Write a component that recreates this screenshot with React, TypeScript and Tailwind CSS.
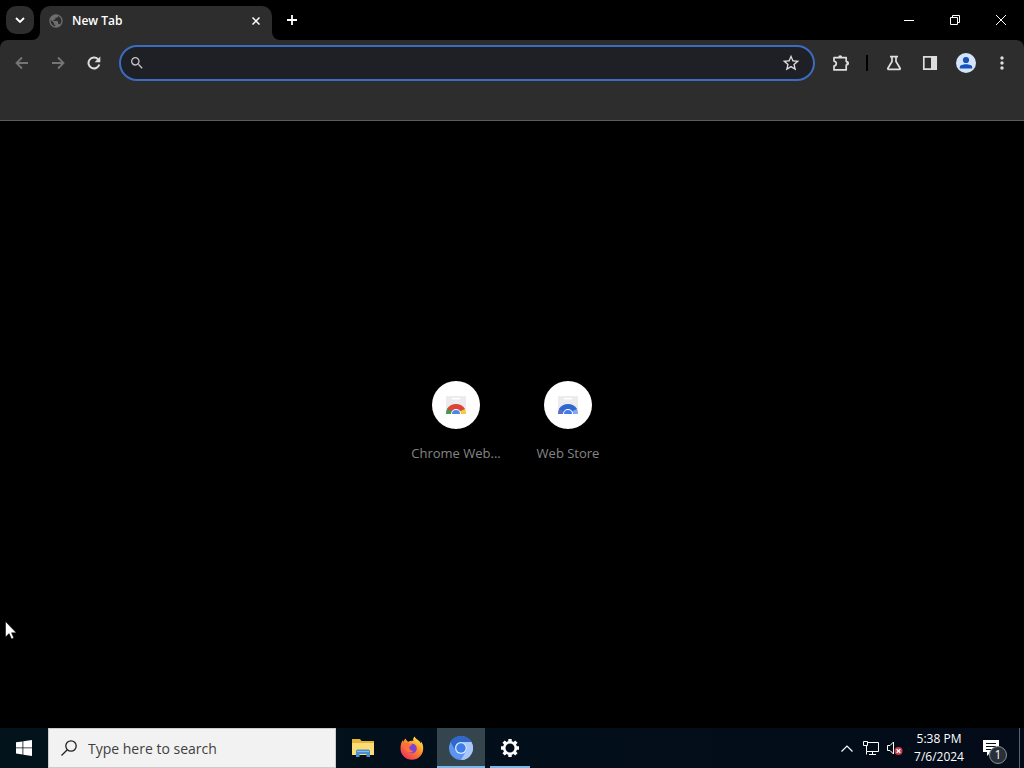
import type { ReactNode } from 'react';
import { MdMoreVert, MdPublic, MdSearch, MdStarBorder } from 'react-icons/md';

type Shortcut = { label: string; href: string; arcs: [string, string, string, string] };

const shortcuts: Shortcut[] = [
  { label: 'Chrome Web...', href: '#chrome-web-store', arcs: ['#db4437', '#3f9d52', '#f5c945', '#4a86e8'] },
  { label: 'Web Store', href: '#web-store', arcs: ['#2f66d0', '#5b6fd0', '#7fa8f5', '#3f7de8'] },
];

function ToolbarButton({ label, dim, children }: { label: string; dim?: boolean; children: ReactNode }) {
  return (
    <button
      type="button"
      aria-label={label}
      className={`grid h-9 w-9 shrink-0 place-items-center rounded-full ${dim ? 'text-[#757575]' : 'text-[#dedede]'}`}
    >
      {children}
    </button>
  );
}

function WindowButton({ label, children }: { label: string; children: ReactNode }) {
  return (
    <button type="button" aria-label={label} className="grid h-10 w-[46px] place-items-center text-white">
      <svg width="12" height="12" viewBox="0 0 12 12" fill="none" stroke="currentColor">
        {children}
      </svg>
    </button>
  );
}

function TabStrip() {
  return (
    <header className="flex h-10 items-end bg-black">
      <button
        type="button"
        aria-label="Search tabs"
        className="mb-1.5 ml-1.5 grid h-7 w-7 place-items-center rounded-[10px] bg-[#2d2d2d] text-white"
      >
        <svg width="10" height="6" viewBox="0 0 10 6" fill="none" stroke="currentColor" strokeWidth="1.8">
          <path d="M1 1l4 4 4-4" />
        </svg>
      </button>
      <div className="relative ml-1.5 flex h-[34px] w-[232px] items-center rounded-t-[10px] bg-[#2d2d2d] px-2 pb-1">
        <svg className="absolute bottom-0 -left-2" width="8" height="8" fill="#2d2d2d">
          <path d="M8 0v8H0a8 8 0 0 0 8-8z" />
        </svg>
        <svg className="absolute -right-2 bottom-0" width="8" height="8" fill="#2d2d2d">
          <path d="M0 0v8h8a8 8 0 0 1-8-8z" />
        </svg>
        <MdPublic className="h-4 w-4 text-[#6e6e6e]" />
        <span className="ml-2 flex-1 text-xs font-semibold text-white">New Tab</span>
        <button type="button" aria-label="Close tab" className="grid h-4 w-4 place-items-center text-white">
          <svg width="8" height="8" viewBox="0 0 8 8" stroke="currentColor" strokeWidth="1.5">
            <path d="M.5.5l7 7M7.5.5l-7 7" />
          </svg>
        </button>
      </div>
      <button type="button" aria-label="New tab" className="mb-1.5 ml-1.5 grid h-7 w-7 place-items-center text-white">
        <svg width="10" height="10" viewBox="0 0 10 10" stroke="currentColor" strokeWidth="1.8">
          <path d="M5 0v10M0 5h10" />
        </svg>
      </button>
      <div className="ml-auto flex">
        <WindowButton label="Minimize">
          <path d="M1 6.5h10" />
        </WindowButton>
        <WindowButton label="Restore">
          <path d="M1.5 3.5h7v7h-7zM3.5 3.5v-2h7v7h-2" />
        </WindowButton>
        <WindowButton label="Close">
          <path d="M1 1l10 10M11 1L1 11" />
        </WindowButton>
      </div>
    </header>
  );
}

function Toolbar() {
  return (
    <div className="bg-black">
      <div className="h-[81px] rounded-t-lg border-b border-[#5c5c5c] bg-[#2d2d2d] px-1 pt-[5px]">
        <div className="flex items-center">
          <ToolbarButton label="Back" dim>
            <svg width="14" height="14" viewBox="0 0 14 14" fill="none" stroke="currentColor" strokeWidth="1.8">
              <path d="M13 7H2M7 1.500L1.500 7 7 12.500" />
            </svg>
          </ToolbarButton>
          <ToolbarButton label="Forward" dim>
            <svg width="14" height="14" viewBox="0 0 14 14" fill="none" stroke="currentColor" strokeWidth="1.8">
              <path d="M1 7h11M7 1.500L12.500 7 7 12.500" />
            </svg>
          </ToolbarButton>
          <ToolbarButton label="Reload">
            <svg width="14" height="14" viewBox="0 0 14 14" fill="none" stroke="currentColor" strokeWidth="2">
              <path d="M12.300 8.500A5.500 5.500 0 1 1 11 3.200" />
              <path d="M13.300.5v5.700H7.600z" fill="currentColor" stroke="none" />
            </svg>
          </ToolbarButton>
          <div className="mr-2 ml-[7px] flex h-9 flex-1 items-center rounded-full border-2 border-[#3c6cc0] bg-[#1f1f26] px-2">
            <MdSearch className="h-4 w-4 text-[#c4c4c4]" />
            <input
              type="text"
              aria-label="Address and search bar"
              className="mx-2 min-w-0 flex-1 bg-transparent text-sm text-white outline-none"
            />
            <button type="button" aria-label="Bookmark this tab" className="px-1 text-[#dedede]">
              <MdStarBorder className="h-5 w-5" />
            </button>
          </div>
          <ToolbarButton label="Extensions">
            <svg width="18" height="18" viewBox="0 0 18 18">
              <path
                d="M2 3.600h12.200v4q2 .1 2 1.700t-2 1.700v4.900H2v-3.800q2.300-.5 2.300-2.500T2 7.100z"
                fill="none"
                stroke="currentColor"
                strokeWidth="1.7"
                strokeLinejoin="round"
              />
              <path d="M6.200 3.200a2 2 0 0 1 4 0zM14.500 7.300a2 2 0 0 1 0 4z" fill="currentColor" />
            </svg>
          </ToolbarButton>
          <div className="mr-2 ml-[7px] h-4 w-0.5 bg-black" />
          <ToolbarButton label="Experiments">
            <svg width="16" height="16" viewBox="0 0 16 16" fill="none" stroke="currentColor" strokeWidth="1.7">
              <path d="M4 1.6h8M6 1.6v4.9L1.9 13.2q-.4 1 .7 1.2h10.8q1.1-.2.7-1.2L10 6.5V1.6" />
            </svg>
          </ToolbarButton>
          <ToolbarButton label="Side panel">
            <svg width="16" height="16" viewBox="0 0 16 16">
              <path d="M1.8 1.8h12.4v12.4H1.8z" fill="none" stroke="currentColor" strokeWidth="1.7" />
              <path d="M9 1h6v14H9z" fill="currentColor" />
            </svg>
          </ToolbarButton>
          <ToolbarButton label="Profile">
            <svg width="20" height="20" viewBox="0 0 20 20">
              <circle cx="10" cy="10" r="10" fill="#d5e4fb" />
              <circle cx="10" cy="7" r="3.1" fill="#1553b8" />
              <path d="M3.800 15.500v-1.300c0-2 3.200-2.900 6.200-2.900s6.200.9 6.200 2.900v1.300z" fill="#1553b8" />
            </svg>
          </ToolbarButton>
          <ToolbarButton label="Menu">
            <MdMoreVert className="h-5 w-5" />
          </ToolbarButton>
        </div>
      </div>
    </div>
  );
}

function StoreIcon({ arcs }: { arcs: Shortcut['arcs'] }) {
  const [top, left, right, core] = arcs;
  return (
    <svg width="24" height="24" viewBox="0 0 24 24">
      <path d="M2 3h20v18H2z" fill="#ececee" />
      <path d="M8 5h8v1.500H8z" fill="#fff" />
      <path d="M2 21a10 10 0 0 1 1.800-6.200L8.500 18 7.500 21z" fill={left} />
      <path d="M22 21a10 10 0 0 0-1.800-6.200L15.500 18l1 3z" fill={right} />
      <path d="M3 16a10.500 10.500 0 0 1 18 0l-4.500 2h-9z" fill={top} />
      <path d="M7 21a5 5 0 0 1 10 0z" fill="#fff" />
      <path d="M8 21a4 4 0 0 1 8 0z" fill={core} />
    </svg>
  );
}

function NewTabPage() {
  return (
    <main className="flex flex-1 items-center justify-center bg-black pb-[7px]">
      {shortcuts.map((s) => (
        <a key={s.label} href={s.href} className="flex h-28 w-28 flex-col items-center pt-4">
          <span className="grid h-12 w-12 place-items-center rounded-full bg-white">
            <StoreIcon arcs={s.arcs} />
          </span>
          <span className="mt-4 text-[13px] leading-4 text-[#858585]">{s.label}</span>
        </a>
      ))}
    </main>
  );
}

function TaskbarApp({ label, active, open, children }: { label: string; active?: boolean; open?: boolean; children: ReactNode }) {
  return (
    <button
      type="button"
      aria-label={label}
      className={`relative grid h-10 w-12 place-items-center ${active ? 'bg-[#34454e]' : ''}`}
    >
      {children}
      {(active || open) && (
        <span className={`absolute bottom-0 h-0.5 bg-[#76b9ed] ${active ? 'inset-x-0' : 'inset-x-1'}`} />
      )}
    </button>
  );
}

function Taskbar() {
  return (
    <footer className="flex h-10 items-stretch bg-linear-to-r from-[#02131c] to-[#030b18] text-white">
      <button type="button" aria-label="Start" className="grid w-12 place-items-center">
        <svg width="16" height="16" viewBox="0 0 16 16" fill="#fff">
          <path d="M0 2.300l6.500-.9v6.100H0zM7.300 1.300L16 0v7.500H7.300zM0 8.300h6.500v6.200L0 13.600zM7.300 8.300H16V16l-8.700-1.300z" />
        </svg>
      </button>
      <label className="flex w-72 items-center border border-[#c9cccd] bg-[#f2f2f2] px-3">
        <svg width="16" height="16" viewBox="0 0 16 16" fill="none" stroke="#222" strokeWidth="1.3">
          <circle cx="10" cy="6" r="5.2" />
          <path d="M6.300 9.700L.5 15.500" />
        </svg>
        <input
          type="text"
          aria-label="Type here to search"
          placeholder="Type here to search"
          className="ml-[11px] min-w-0 flex-1 bg-transparent pt-0.5 text-sm outline-none placeholder:text-[#404040]"
        />
      </label>
      <nav className="ml-[3px] flex gap-px">
        <TaskbarApp label="File Explorer">
          <svg width="22" height="20" viewBox="0 0 22 20">
            <path d="M0 1h8l1.500 2H22v14H0z" fill="#e9b43c" />
            <path d="M0 5h22v12H0z" fill="#fbdc75" />
            <path d="M4 19v-6q0-1.500 1.500-1.500h11q1.500 0 1.500 1.500v6h-3.500v-3h-7v3z" fill="#4a90cc" />
            <path d="M5 13h12v1H5z" fill="#86bde8" />
          </svg>
        </TaskbarApp>
        <TaskbarApp label="Firefox">
          <svg width="24" height="24" viewBox="0 0 24 24">
            <defs>
              <linearGradient id="flame" x1="0.85" y1="0.05" x2="0.2" y2="0.95">
                <stop offset="0" stopColor="#fff04a" />
                <stop offset="0.45" stopColor="#ff8a2a" />
                <stop offset="1" stopColor="#f0305f" />
              </linearGradient>
            </defs>
            <path
              d="M14.500.5c-1.500 1.500-1.500 3-1.200 4.500-1.500-.5-3.500-.3-4.800.8C7 5.500 6 4 5.800 2.500 4.500 3.500 3.600 4.700 3.200 6c-.3-.6-.3-1.200-.2-2C1.200 6 .5 9 .5 12.500a11.300 11.300 0 0 0 22.700 0c0-3-.8-5.500-2.400-7.200.2 1 .2 1.600 0 2.300-.8-3.300-4.800-4-6.300-7.100z"
              fill="url(#flame)"
            />
            <circle cx="12" cy="12.5" r="4.8" fill="#7a45d6" />
            <path d="M3 8c2-2 5-1.800 6.200-.2 1.200.2 2.500.2 3 .8-.3 1.200-2.700 1.500-3 2.800.2 2.200 2 3.400 4 3.600-1 1.500-2.500 1.800-3.800 1.400C6 16 4.500 12 5 9z" fill="#ff7139" />
          </svg>
        </TaskbarApp>
        <TaskbarApp label="Chromium" active>
          <svg width="24" height="24" viewBox="0 0 24 24">
            <circle cx="12" cy="12" r="12" fill="#5b95ef" />
            <path d="M1.600 6A12 12 0 0 1 22.400 6H12a6 6 0 0 0-5.200 9z" fill="#2f68c8" />
            <path d="M12 6h10.400A12 12 0 0 1 12 24l5.200-9A6 6 0 0 0 12 6z" fill="#a9c7fa" />
            <circle cx="12" cy="12" r="6" fill="#dbe8ff" />
            <circle cx="12" cy="12" r="4.7" fill="#3f7de8" />
          </svg>
        </TaskbarApp>
        <TaskbarApp label="Settings" open>
          <svg width="20" height="20" viewBox="0 0 20 20" fill="none" stroke="#fff">
            <circle cx="10" cy="10" r="5.8" strokeWidth="2.6" />
            <path
              d="M10 1v3.500M10 15.500V19M1 10h3.500M15.500 10H19M3.600 3.600l2.200 2.200M14.200 14.200l2.200 2.200M16.400 3.600l-2.200 2.200M5.800 14.200l-2.200 2.200"
              strokeWidth="3.4"
            />
          </svg>
        </TaskbarApp>
      </nav>
      <div className="ml-auto flex items-center">
        <button type="button" aria-label="Show hidden icons" className="grid h-10 w-6 place-items-center">
          <svg width="12" height="7" viewBox="0 0 12 7" fill="none" stroke="#fff" strokeWidth="1.2">
            <path d="M.5 6.500L6 1l5.500 5.500" />
          </svg>
        </button>
        <button type="button" aria-label="Network" className="grid h-10 w-6 place-items-center">
          <svg width="16" height="14" viewBox="0 0 16 14" fill="none" stroke="#fff">
            <path d="M4.500 1.500h11v9h-12v-6M9.500 10.500v3M6 13.500h7M.5.5h4v4h-4zM3.500 10.500v3" />
          </svg>
        </button>
        <button type="button" aria-label="Volume muted" className="grid h-10 w-6 place-items-center">
          <svg width="16" height="14" viewBox="0 0 16 14">
            <path d="M.5 4.500H3L6.500 1v12L3 9.500H.5z" fill="none" stroke="#fff" />
            <circle cx="11.5" cy="10" r="4" fill="#d03a48" />
            <path d="M9.700 8.200l3.600 3.600M13.300 8.200l-3.600 3.600" stroke="#fff" strokeWidth="1.3" />
          </svg>
        </button>
        <button type="button" className="w-16 text-center text-xs leading-[18px]">
          <span className="block">5:38 PM</span>
          <span className="block">7/6/2024</span>
        </button>
        <button type="button" aria-label="Notifications" className="relative h-10 w-12">
          <svg className="absolute top-3 left-3" width="16" height="16" viewBox="0 0 16 16">
            <path d="M0 0h16v12H8l-4 4v-4H0z" fill="#fff" />
            <path d="M3 3.500h10M3 6.500h10M3 9.500h7" stroke="#03101b" />
          </svg>
          <span className="absolute top-[18px] left-[18px] grid h-[18px] w-[18px] place-items-center rounded-full border border-[#8a8f94] bg-[#2a3038] text-xs leading-none">
            1
          </span>
        </button>
        <button type="button" aria-label="Show desktop" className="h-10 w-[5px] border-l border-[#5a626a]" />
      </div>
    </footer>
  );
}

export default function App() {
  return (
    <div className="relative flex min-h-screen flex-col bg-black font-['Open_Sans','Noto_Sans',sans-serif]">
      <TabStrip />
      <Toolbar />
      <NewTabPage />
      <Taskbar />
      <svg className="pointer-events-none absolute top-[621px] left-[5px]" width="12" height="19" viewBox="0 0 12 19" fill="#fff">
        <path d="M.5.5v15.500l3.600-3.400L6.500 18l2.300-1-2.300-5.200h4.800z" stroke="#000" strokeWidth=".5" />
      </svg>
    </div>
  );
}
